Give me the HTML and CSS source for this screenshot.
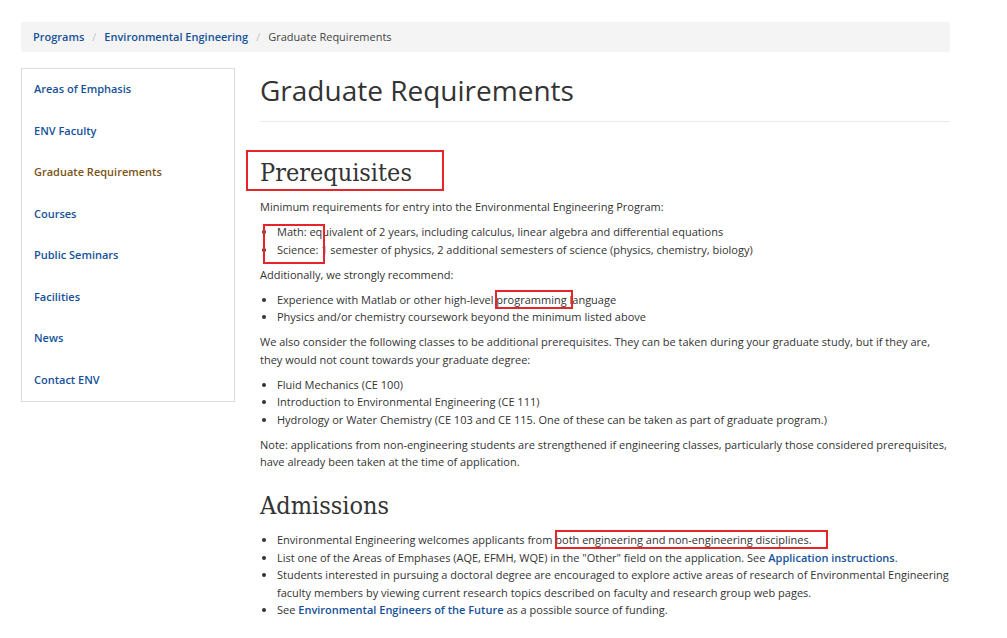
FILE: index.html
```html
<!DOCTYPE html>
<html lang="en">
<head>
<meta charset="utf-8">
<title>Graduate Requirements</title>
<link rel="stylesheet" href="styles.css">
</head>
<body>
<div class="page">
  <nav class="crumbs">
    <a href="#">Programs</a><span class="sep">/</span><a href="#">Environmental Engineering</a><span class="sep">/</span><span class="here">Graduate Requirements</span>
  </nav>
  <div class="cols">
    <aside class="side">
      <a href="#">Areas of Emphasis</a>
      <a href="#">ENV Faculty</a>
      <a href="#" class="active">Graduate Requirements</a>
      <a href="#">Courses</a>
      <a href="#">Public Seminars</a>
      <a href="#">Facilities</a>
      <a href="#">News</a>
      <a href="#">Contact ENV</a>
    </aside>
    <main class="main">
      <h1 class="title">Graduate Requirements</h1>
      <h2 class="sec first"><span class="mark mark-h">Prerequisites</span></h2>
      <p>Minimum requirements for entry into the Environmental Engineering Program:</p>
      <ul class="mathlist">
        <li>Math: equivalent of 2 years, including calculus, linear algebra and differential equations</li>
        <li>Science: 1 semester of physics, 2 additional semesters of science (physics, chemistry, biology)</li>
      </ul>
      <p>Additionally, we strongly recommend:</p>
      <ul>
        <li>Experience with Matlab or other high-level <span class="mark mark-prog">programming </span>language</li>
        <li>Physics and/or chemistry coursework beyond the minimum listed above</li>
      </ul>
      <p>We also consider the following classes to be additional prerequisites. They can be taken during your graduate study, but if they are, they would not count towards your graduate degree:</p>
      <ul>
        <li>Fluid Mechanics (CE 100)</li>
        <li>Introduction to Environmental Engineering (CE 111)</li>
        <li>Hydrology or Water Chemistry (CE 103 and CE 115. One of these can be taken as part of graduate program.)</li>
      </ul>
      <p>Note: applications from non-engineering students are strengthened if engineering classes, particularly those considered prerequisites, have already been taken at the time of application.</p>
      <h2 class="sec">Admissions</h2>
      <ul>
        <li>Environmental Engineering welcomes applicants from <span class="mark mark-both">both engineering and non-engineering disciplines.</span></li>
        <li>List one of the Areas of Emphases (AQE, EFMH, WQE) in the "Other" field on the application. See <a href="#">Application instructions</a>.</li>
        <li>Students interested in pursuing a doctoral degree are encouraged to explore active areas of research of Environmental Engineering faculty members by viewing current research topics described on faculty and research group web pages.</li>
        <li>See <a href="#">Environmental Engineers of the Future</a> as a possible source of funding.</li>
      </ul>
    </main>
  </div>
</div>
</body>
</html>
```

FILE: styles.css
```css
* { box-sizing: border-box; }
html, body { margin: 0; padding: 0; background: #fff; }
body {
  font-family: "Open Sans", "Liberation Sans", sans-serif;
  font-size: 11px;
  color: #333;
}
a { color: #16529a; text-decoration: none; }

.page {
  width: 929px;
  margin-left: 21px;
  padding-top: 22px;
}

.crumbs {
  height: 30px;
  background: #f4f4f4;
  border-radius: 3px;
  padding: 0 12px 1px;
  display: flex;
  align-items: center;
  font-size: 11px;
}
.crumbs a { font-weight: 600; }
.crumbs .sep { color: #c8c8c8; padding: 0 8px; }
.crumbs .here { color: #444; }

.cols {
  display: flex;
  gap: 25px;
  margin-top: 16px;
}

.side {
  width: 214px;
  flex: none;
  align-self: flex-start;
  border: 1px solid #dcdcdc;
  display: flex;
  flex-direction: column;
}
.side a {
  display: block;
  padding: 11px 12px 13px;
  line-height: 17.5px;
  font-weight: 600;
  font-size: 11px;
}
.side a.active { color: #7a5417; }

.main { flex: 1; min-width: 0; }
.main a { font-weight: 600; }

.title {
  font-family: "Open Sans", "Liberation Sans", sans-serif;
  font-weight: 400;
  font-size: 28px;
  line-height: 36px;
  color: #333;
  margin: 4px 0 0;
  padding-bottom: 13px;
  border-bottom: 1px solid #eaeaea;
}

.sec {
  font-family: "DejaVu Serif Condensed", "DejaVu Serif", serif;
  font-weight: 400;
  font-size: 25px;
  line-height: 32px;
  color: #333;
  margin: 19.5px 0 9px;
}
.sec.first { margin-top: 35px; }

p { margin: 0 0 7.5px; line-height: 17.5px; }
ul {
  margin: 0 0 7.5px;
  padding-left: 17px;
  line-height: 17.5px;
}

.mark { position: relative; }
.mark::after {
  content: "";
  position: absolute;
  border: 2px solid #e8242b;
  pointer-events: none;
}
.mark-h { display: inline-block; }
.mark-h::after { left: -14px; right: -32px; top: -7px; bottom: -2px; }
.mark-prog::after { left: -1px; right: -3px; top: -2px; bottom: -2px; }
.mark-both::after { left: 0; right: -16px; top: -2px; bottom: -2px; }

.mathlist { position: relative; }
.mathlist::after {
  content: "";
  position: absolute;
  left: 3px;
  top: 1px;
  width: 58px;
  height: 36px;
  border: 2px solid #e8242b;
  pointer-events: none;
}
```
